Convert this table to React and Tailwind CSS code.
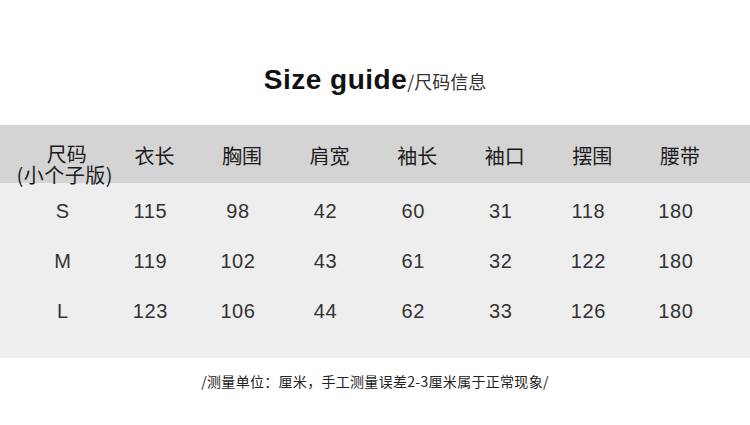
const headers = ["衣长", "胸围", "肩宽", "袖长", "袖口", "摆围", "腰带"];

const rows = [
  ["S", "115", "98", "42", "60", "31", "118", "180"],
  ["M", "119", "102", "43", "61", "32", "122", "180"],
  ["L", "123", "106", "44", "62", "33", "126", "180"],
];

const cjk = "font-['Noto_Sans_CJK_SC',sans-serif]";
const latin = "font-['Liberation_Sans','Noto_Sans_CJK_SC',sans-serif]";

export default function App() {
  return (
    <div className="h-[425px] w-[750px] overflow-hidden bg-white text-[#1c1c1c]">
      {/* title */}
      <div className="mt-[64px] flex h-[32px] items-baseline justify-center leading-[32px]">
        <span className={`${latin} text-[28px] font-bold tracking-[0.5px] text-[#111]`}>Size guide</span>
        <span className={`${cjk} text-[18px] text-[#333]`}>/尺码信息</span>
      </div>

      {/* table */}
      <div className="mt-[29px]">
        <div className="grid h-[58px] grid-cols-[repeat(8,87.6px)] bg-[#d4d4d4] pl-[23px] pt-[21px]">
          <div className={`${cjk} -mt-[3px] flex flex-col items-center text-[20px] leading-[21px]`}>
            <span>尺码</span>
            <span className="-ml-[4px] whitespace-nowrap tracking-[0.5px]">(小个子版)</span>
          </div>
          {headers.map((h) => (
            <div key={h} className={`${cjk} text-center text-[20px] leading-[20px]`}>
              {h}
            </div>
          ))}
        </div>

        <div className="h-[175px] bg-[#eeeeee] pl-[19px] pt-[3px]">
          {rows.map((r) => (
            <div key={r[0]} className="grid h-[50px] grid-cols-[repeat(8,87.6px)] items-center">
              {r.map((v, i) => (
                <div key={i} className={`${latin} text-center text-[20px] tracking-[0.6px] text-[#333]`}>
                  {v}
                </div>
              ))}
            </div>
          ))}
        </div>
      </div>

      {/* note */}
      <div className={`${cjk} mt-[13px] text-center text-[14px] leading-[20px] tracking-[0.3px] text-[#222]`}>
        /测量单位：厘米，手工测量误差2-3厘米属于正常现象/
      </div>
    </div>
  );
}
